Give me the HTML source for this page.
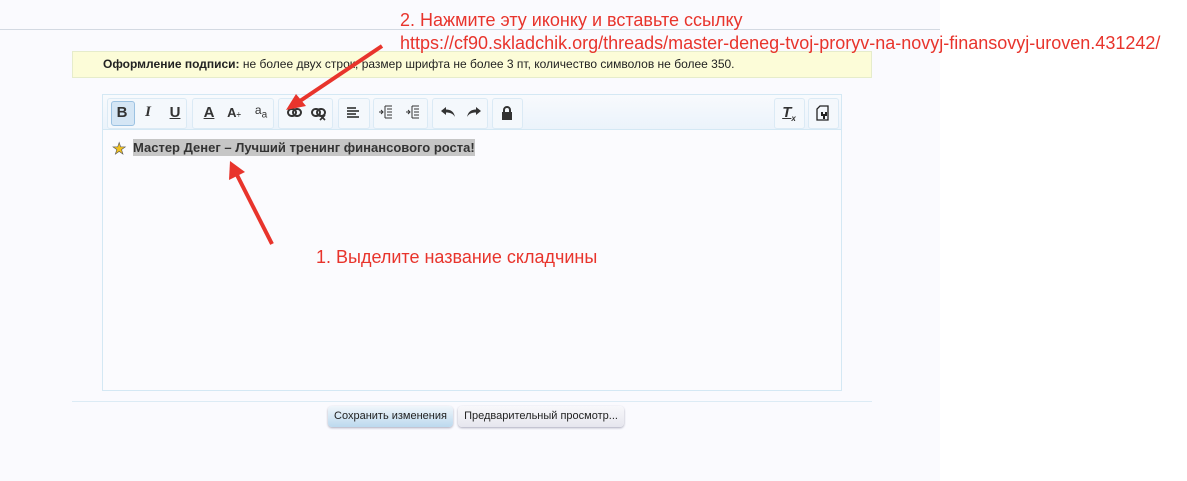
<!DOCTYPE html>
<html><head><meta charset="utf-8"><style>
body{margin:0;width:1187px;height:481px;background:#fff;font-family:"Liberation Sans",sans-serif;position:relative;overflow:hidden}
.bg{position:absolute;left:0;top:0;width:940px;height:481px;background:#fafafe}
.hr{position:absolute;left:0;top:29px;width:940px;height:1px;background:#d3d9e2}
.note{position:absolute;left:72px;top:51px;width:798px;height:25px;background:#fcfcd8;border:1px solid #e6eccb;font-size:12px;line-height:25px;color:#222}
.note b{margin-left:30px}
.ed{position:absolute;left:102px;top:94px;width:738px;height:295px;border:1px solid #d4e8f4;background:#fbfbfe}
.tb{height:34px;border-bottom:1px solid #d4e8f4;background:linear-gradient(#f8fafd,#ebf3fb)}
.g{position:absolute;top:3px;height:29px;border:1px solid #dbeaf5;border-radius:3px;background:#f4f8fc}
.i{position:absolute;font-size:15px;font-weight:bold;color:#333;width:22px;text-align:center}
.txt{position:absolute;left:30px;top:44px;font-size:13px;font-weight:bold;color:#333;background:#c6c6c6;line-height:17px}
.star{position:absolute;left:9px;top:44px;color:#f0c020;font-size:16px;-webkit-text-stroke:0.6px #555}
.red{position:absolute;color:#e8342c;font-size:18px}
.sep{position:absolute;left:72px;top:401px;width:800px;height:1px;background:#dcebf5}
.btn{position:absolute;top:406px;height:21px;border-radius:4px;font-size:11px;line-height:21px;text-align:center;color:#222;box-shadow:0 1px 2px #aab}
</style></head><body>
<div class="bg"></div><div class="hr"></div>
<div class="note"><b>Оформление подписи:</b> не более двух строк, размер шрифта не более 3 пт, количество символов не более 350.</div>
<div class="ed"><div class="tb">
<div class="g" style="left:4px;width:78px"></div>
<div class="g" style="left:89px;width:80px"></div>
<div class="g" style="left:175px;width:53px"></div>
<div class="g" style="left:235px;width:30px"></div>
<div class="g" style="left:270px;width:53px"></div>
<div class="g" style="left:329px;width:54px"></div>
<div class="g" style="left:389px;width:29px"></div>
<div class="g" style="left:671px;width:29px"></div>
<div class="g" style="left:705px;width:29px"></div>
<div style="position:absolute;left:8px;top:6px;width:22px;height:23px;background:#d5e6f5;border:1px solid #9cc2e2;border-radius:3px"></div>
<div class="i" style="left:8px;top:9px">B</div>
<div class="i" style="left:34px;top:9px;font-style:italic;font-family:'Liberation Serif',serif">I</div>
<div class="i" style="left:61px;top:9px;text-decoration:underline">U</div>
<div class="i" style="left:95px;top:9px;text-decoration:underline">A</div>
<div class="i" style="left:120px;top:10px;font-size:13px">A<span style="font-size:8px">÷</span></div>
<div class="i" style="left:147px;top:8px;font-size:12px;font-weight:normal">a<sub>a</sub></div>
<svg style="position:absolute;left:184px;top:13px" width="16" height="10"><rect x="1" y="1" width="8" height="7" rx="3.5" fill="none" stroke="#333" stroke-width="2"/><rect x="6" y="1" width="8" height="7" rx="3.5" fill="none" stroke="#333" stroke-width="2"/></svg>
<svg style="position:absolute;left:208px;top:13px" width="16" height="13"><rect x="1" y="1" width="8" height="7" rx="3.5" fill="none" stroke="#333" stroke-width="2"/><rect x="6" y="1" width="8" height="7" rx="3.5" fill="none" stroke="#333" stroke-width="2"/><path d="M9 7l5 5M14 7l-5 5" stroke="#333" stroke-width="1.6"/></svg>
<svg style="position:absolute;left:244px;top:12px" width="12" height="11"><path d="M0 1h9M0 4h12M0 7h9M0 10h12" stroke="#222" stroke-width="1.6"/></svg>
<svg style="position:absolute;left:276px;top:10px" width="14" height="14"><path d="M6 1h7M8 4h5M8 7h5M8 10h5M6 13h7M6 1v12" stroke="#333" stroke-width="1"/><path d="M0 7h4M2 5l2 2-2 2" stroke="#333" fill="none"/></svg>
<svg style="position:absolute;left:303px;top:10px" width="14" height="14"><path d="M6 1h7M8 4h5M8 7h5M8 10h5M6 13h7M6 1v12" stroke="#333" stroke-width="1"/><path d="M0 7h4M2 5l2 2-2 2" stroke="#333" fill="none"/></svg>
<svg style="position:absolute;left:338px;top:11px" width="14" height="12"><path d="M5 1L0 5l5 4V6.5c4 0 7 1 9 4.5-1-5-4-7.5-9-7.5z" fill="#333"/></svg>
<svg style="position:absolute;left:364px;top:11px" width="14" height="12"><path d="M9 1l5 4-5 4V6.5c-4 0-7 1-9 4.5 1-5 4-7.5 9-7.5z" fill="#333"/></svg>
<svg style="position:absolute;left:398px;top:11px" width="12" height="14"><rect x="1" y="6" width="10" height="8" fill="#333"/><path d="M3 6V4a3 3 0 0 1 6 0v2" stroke="#333" stroke-width="2" fill="none"/></svg>
<div class="i" style="left:675px;top:9px;font-style:italic;text-decoration:underline">T<sub style="font-size:8px">x</sub></div>
<svg style="position:absolute;left:713px;top:10px" width="14" height="16"><path d="M4 1h8v14H1V4z" fill="none" stroke="#222" stroke-width="1.3"/><path d="M6 7v3h4V7M8 10v4" stroke="#222" stroke-width="2" fill="none"/></svg>
</div>
<div class="star">★</div>
<div class="txt">Мастер Денег – Лучший тренинг финансового роста!</div>
</div>
<div class="sep"></div>
<div class="btn" style="left:328px;width:125px;background:linear-gradient(#f0f6fb,#bcd9ee)">Сохранить изменения</div>
<div class="btn" style="left:458px;width:166px;background:linear-gradient(#f8f8fb,#e6e6ee)">Предварительный просмотр...</div>
<div class="red" style="left:400px;top:10px">2. Нажмите эту иконку и вставьте ссылку</div>
<div class="red" style="left:400px;top:33px">https://cf90.skladchik.org/threads/master-deneg-tvoj-proryv-na-novyj-finansovyj-uroven.431242/</div>
<div class="red" style="left:316px;top:247px">1. Выделите название складчины</div>
<svg style="position:absolute;left:0;top:0" width="1187" height="481">
<line x1="382" y1="46" x2="300" y2="101" stroke="#e8342c" stroke-width="4"/>
<polygon points="286,110 296,94 306,106" fill="#e8342c"/>
<line x1="272" y1="244" x2="237" y2="175" stroke="#e8342c" stroke-width="4"/>
<polygon points="230,161 229,180 245,172" fill="#e8342c"/>
</svg>
</body></html>
